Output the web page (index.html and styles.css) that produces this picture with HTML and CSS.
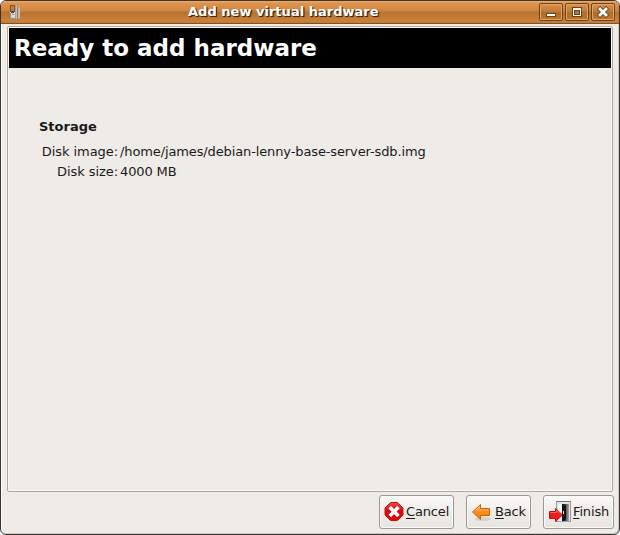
FILE: index.html
```html
<!DOCTYPE html>
<html lang="en">
<head>
<meta charset="utf-8">
<title>Add new virtual hardware</title>
<link rel="stylesheet" href="styles.css">
</head>
<body>
<div class="window">
  <header class="titlebar">
    <svg class="app-icon" width="12" height="16" viewBox="0 0 12 16">
      <path d="M5 0h4l2 2v12H5z" fill="#b3a08c"/><path d="M7 1h1v13H7zM9 2l2 1v10H9z" fill="#c1beb8"/>
      <path d="M8 2h1v12H8z" fill="#9b7855"/><rect x="1" y="0" width="5" height="8" fill="#805229"/>
      <rect x="2" y="1" width="3" height="6" fill="#c77e31"/><rect x="1" y="7" width="5" height="7" fill="#d3dade"/>
      <path d="M1 8h1v6H1zM3 9h2v1H3zM2 13h4v1H2z" fill="#84939a"/><path d="M2 6h3v2H2z" fill="#454a4b"/>
    </svg>
    <h1 class="title"><span>Add new virtual hardware</span></h1>
    <div class="controls">
      <span class="control"><svg width="22" height="16" viewBox="0 0 22 16"><rect x="6" y="9" width="10" height="4" fill="#6b421c"/><rect x="7" y="10" width="8" height="2" fill="#fff"/></svg></span>
      <span class="control"><svg width="22" height="16" viewBox="0 0 22 16"><path d="M6 3h10v10H6z" fill="#6b421c"/><path d="M7 4h8v8H7z" fill="#fff"/><path d="M8 6h6v5H8z" fill="#6b421c"/><path d="M9 7h4v3H9z" fill="#b5722f"/></svg></span>
      <span class="control"><svg width="22" height="16" viewBox="0 0 22 16"><path d="M8 5l6 6M14 5l-6 6" stroke="#6b421c" stroke-width="4.500" stroke-linecap="square"/><path d="M8 5l6 6M14 5l-6 6" stroke="#fff" stroke-width="2.800" stroke-linecap="square"/></svg></span>
    </div>
  </header>
  <main class="page">
    <h2 class="heading"><span>Ready to add hardware</span></h2>
    <section class="summary">
      <h3 class="section-title">Storage</h3>
      <dl class="details">
        <dt>Disk image:</dt><dd>/home/james/debian-lenny-base-server-sdb.img</dd>
        <dt>Disk size:</dt><dd>4000 MB</dd>
      </dl>
    </section>
  </main>
  <footer class="actions">
    <button class="button cancel">
      <svg width="22" height="22" viewBox="0 0 22 22"><defs><linearGradient id="red" x2="0" y2="1"><stop stop-color="#e84b4b"/><stop offset=".5" stop-color="#d00c0c"/><stop offset="1" stop-color="#e30000"/></linearGradient></defs>
      <path d="M6.500 1.500h7l5.500 5.500v7L13.500 19.500h-7L1 14V7z" fill="url(#red)" stroke="#c41818"/><path d="M7 7.500l6.200 6.200M13.200 7.500l-6.200 6.200" stroke="#fff" stroke-width="3.600" stroke-linecap="square"/></svg>
      <span><u>C</u>ancel</span>
    </button>
    <button class="button back">
      <svg width="22" height="22" viewBox="0 0 22 22"><defs><linearGradient id="orange" x2="0" y2="1"><stop stop-color="#ffc17b"/><stop offset=".55" stop-color="#f98c1b"/><stop offset="1" stop-color="#f57900"/></linearGradient></defs>
      <ellipse cx="12" cy="18" rx="8" ry="2" fill="#000" opacity=".1"/><path d="M1.500 11L9.500 3.500v4h9v7h-9v4z" fill="url(#orange)" stroke="#c8650c" stroke-linejoin="round"/></svg>
      <span><u>B</u>ack</span>
    </button>
    <button class="button finish">
      <svg width="24" height="24" viewBox="0 0 24 24"><defs><linearGradient id="room"><stop stop-color="#000"/><stop offset=".4" stop-color="#222"/><stop offset="1" stop-color="#aaa"/></linearGradient></defs>
      <rect x="8.500" y="1.500" width="14" height="20" fill="#e4e4e2" stroke="#9a9a98"/><path d="M8 1h15v1H8z" fill="#777"/><rect x="13" y="4" width="8" height="17" fill="url(#room)"/><path d="M10 4h4v17h-4z" fill="#f8f8f8"/><path d="M15 7l3-2v14l-3 2z" fill="#111"/><path d="M15 11h1v3h-1z" fill="#eee"/><path d="M9 21h13v1H9z" fill="#8ea3ca"/>
      <path d="M1.500 11.500h6v-3l7 6.500-7 6.500v-3h-6z" fill="#ef1c1c" stroke="#c00c0c" stroke-linejoin="round"/><path d="M2.500 12.500h6v-2l4 3.500" fill="none" stroke="#ff6666"/></svg>
      <span><u>F</u>inish</span>
    </button>
  </footer>
</div>
</body>
</html>
```
FILE: styles.css
```css
* { box-sizing: border-box; }
body { margin: 0; background: #fff; font: 13px "DejaVu Sans", sans-serif; color: #1a1a1a; }
h1, h2, h3, dl, dd { margin: 0; }
svg { display: block; flex: none; }
.window { width: 620px; height: 535px; display: flex; flex-direction: column; background: #efebe7; border: 1px solid #3c3431; border-radius: 6px; overflow: hidden; box-shadow: inset 1px 0 #fff, inset -1px -1px #cfc8c2; }
.titlebar { height: 23px; flex: none; display: flex; align-items: center; border-bottom: 1px solid #80502a; background: linear-gradient(#efac6c 0, #df954e 2px, #cf8540 10px, #b9732e 11px, #c9803a 20px, #c27830 22px); padding: 0 4px 0 8px; }
.app-icon { margin-top: 2px; }
.title { flex: 1; padding-left: 167px; white-space: nowrap; font-size: 13px; line-height: 22px; letter-spacing: .02px; color: #fff; text-shadow: 1px 1px 1px #35200d, 1px 1px #6b421c; }
.controls { display: flex; gap: 2px; }
.control { width: 24px; height: 18px; border: 1px solid #6b421c; border-radius: 2px; background: linear-gradient(#d9924f, #bd7733 50%, #ad6c2c 51%, #bd7733); box-shadow: inset 0 0 0 1px #e0a469; }
.page { flex: none; height: 466px; margin: 2px 6px 0; border: 1px solid #b4a698; border-radius: 2px; box-shadow: inset 0 0 0 1px #faf8f5; padding: 1px; }
.heading { height: 40px; background: #000; color: #fff; font-size: 23px; line-height: 40px; padding-left: 5px; white-space: nowrap; }
.summary { padding: 51px 0 0 30px; }
.section-title { font-size: 13px; line-height: 16px; }
.details { display: grid; grid-template-columns: 79px auto; column-gap: 2px; row-gap: 4px; line-height: 16px; margin-top: 9px; letter-spacing: -.12px; }
.details dt { text-align: right; white-space: nowrap; letter-spacing: -.06px; }
.actions { display: flex; justify-content: flex-end; gap: 12px; padding: 3px 5px 0 0; }
.button { height: 34px; display: flex; align-items: center; border: 1px solid #9b9792; border-radius: 3px; background: linear-gradient(#fbfaf9, #efebe7 50%, #e8e4df); box-shadow: inset 0 0 0 1px #fbfaf8; padding: 0 0 0 4px; font: inherit; letter-spacing: -.15px; color: inherit; white-space: nowrap; }
.button span { padding-bottom: 2px; }
.cancel { width: 75px; }
.back { width: 65px; }
.back svg { margin-right: 2px; }
.finish { width: 71px; }
.finish svg { margin-right: 1px; }
.button u { text-underline-offset: 2px; text-decoration-thickness: 1px; }
```
